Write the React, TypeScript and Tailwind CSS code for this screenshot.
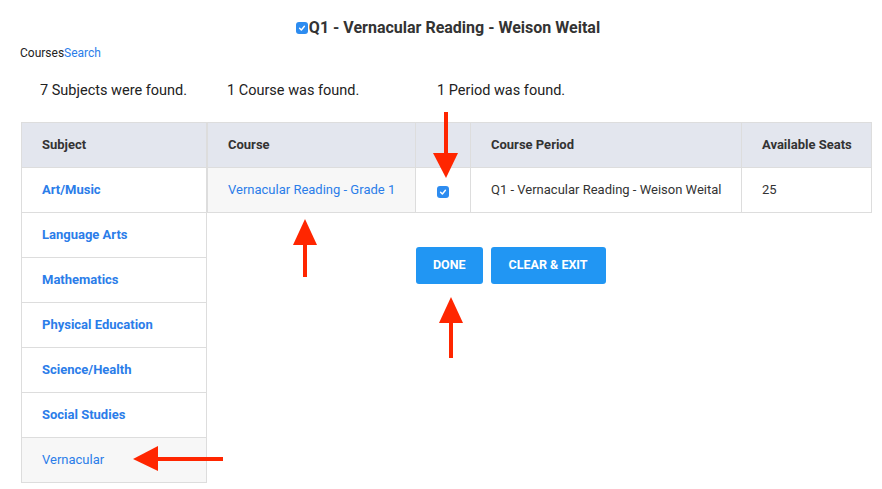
import React from "react";

const subjects = [
  "Art/Music",
  "Language Arts",
  "Mathematics",
  "Physical Education",
  "Science/Health",
  "Social Studies",
  "Vernacular",
];

const th = "h-[45px] px-5 text-left align-middle whitespace-nowrap font-bold text-[13px] text-[#333] bg-[#e3e6ee] border border-[#dddddd]";
const td = "h-[45px] px-5 align-middle whitespace-nowrap text-[13px] border border-[#dddddd]";

function Check() {
  return (
    <span className="inline-flex w-[12px] h-[12px] rounded-[3px] bg-[#2d8cf0] items-center justify-center">
      <svg width="8" height="8" viewBox="0 0 10 10">
        <path d="M2 5.3 L4.2 7.4 L8 2.8" fill="none" stroke="white" strokeWidth="1.8" strokeLinecap="round" strokeLinejoin="round" />
      </svg>
    </span>
  );
}

function Arrows() {
  const red = "#ff2600";
  return (
    <svg className="absolute inset-0 pointer-events-none" width="882" height="489">
      {/* down into checkbox */}
      <rect x="444" y="112" width="4" height="44" fill={red} />
      <polygon points="433,153 458,153 446,178" fill={red} />
      {/* up at course */}
      <rect x="303" y="240" width="4" height="37" fill={red} />
      <polygon points="293,245 317,245 305,219" fill={red} />
      {/* up at done */}
      <rect x="449" y="318" width="4" height="40" fill={red} />
      <polygon points="439,323 463,323 451,297" fill={red} />
      {/* left at vernacular */}
      <rect x="152" y="457" width="71" height="4" fill={red} />
      <polygon points="158,446 158,471 133,459" fill={red} />
    </svg>
  );
}

export default function App() {
  return (
    <div className="relative w-[882px] h-[489px] bg-white text-[#222] font-['Roboto',sans-serif] overflow-hidden">
      <div className="flex justify-center items-center pt-[18px] pl-[14px]">
        <Check />
        <h1 className="ml-px text-[16px] leading-[20px] font-bold text-[#333]">
          Q1 - Vernacular Reading - Weison Weital
        </h1>
      </div>
      <div className="pl-5 pt-[7px] text-[12px] leading-[16px]">
        Courses<span className="text-[#2b7de9]">Search</span>
      </div>

      <div className="flex pl-[21px] pt-[21px]">
        <div className="w-[186px]">
          <p className="pl-[19px] text-[14.5px] leading-[18px] h-[40px]">7 Subjects were found.</p>
          <table className="w-[186px] border-collapse">
            <thead>
              <tr><th className={th}>Subject</th></tr>
            </thead>
            <tbody>
              {subjects.map((s) => {
                const active = s === "Vernacular";
                return (
                  <tr key={s}>
                    <td className={`${td} ${active ? "bg-[#f7f7f7] font-normal" : "font-bold"} text-[#2b7de9]`}>{s}</td>
                  </tr>
                );
              })}
            </tbody>
          </table>
        </div>

        <div className="w-[208px]">
          <p className="pl-5 text-[14.5px] leading-[18px] h-[40px]">1 Course was found.</p>
          <table className="w-[208px] border-collapse">
            <thead>
              <tr><th className={th}>Course</th></tr>
            </thead>
            <tbody>
              <tr>
                <td className={`${td} bg-[#f7f7f7] text-[#2b7de9]`}>Vernacular Reading - Grade 1</td>
              </tr>
            </tbody>
          </table>
        </div>

        <div className="w-[457px]">
          <p className="pl-[22px] text-[14.5px] leading-[18px] h-[40px]">1 Period was found.</p>
          <table className="w-[457px] border-collapse table-fixed">
            <thead>
              <tr>
                <th className={`${th} w-[55px]`}></th>
                <th className={`${th} w-[271px]`}>Course Period</th>
                <th className={th}>Available Seats</th>
              </tr>
            </thead>
            <tbody>
              <tr>
                <td className={`${td} text-center`}><span className="inline-flex translate-y-[2px]"><Check /></span></td>
                <td className={`${td} text-[#333]`}>Q1 - Vernacular Reading - Weison Weital</td>
                <td className={`${td} text-[#333]`}>25</td>
              </tr>
            </tbody>
          </table>
          <div className="flex gap-2 pl-px pt-[34px]">
            <button className="h-[37px] px-[17px] rounded-[3px] bg-[#2196f3] text-white text-[12.5px] font-bold">DONE</button>
            <button className="h-[37px] px-[18px] rounded-[3px] bg-[#2196f3] text-white text-[12.5px] font-bold">CLEAR &amp; EXIT</button>
          </div>
        </div>
      </div>
      <Arrows />
    </div>
  );
}
